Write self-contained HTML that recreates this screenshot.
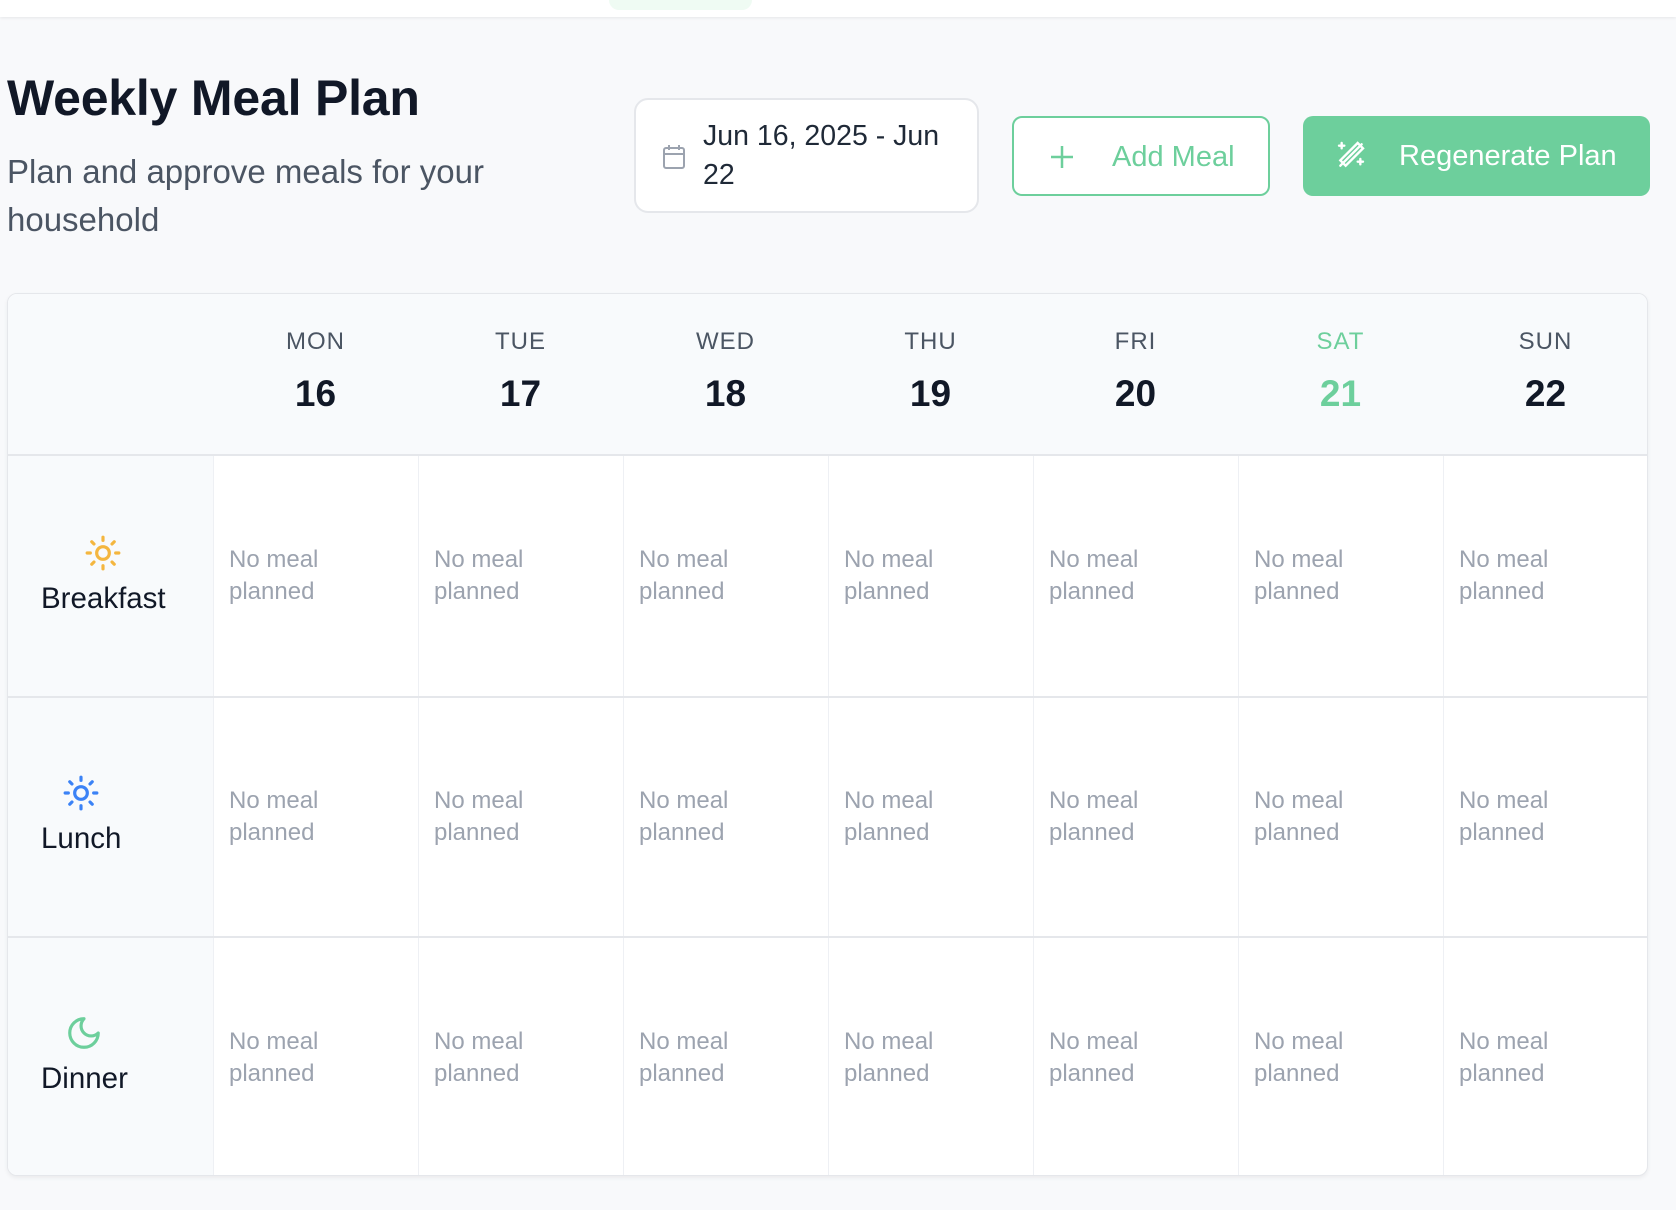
<!DOCTYPE html>
<html><head><meta charset="utf-8"><style>
*{box-sizing:border-box;margin:0;padding:0}
body{width:1676px;height:1210px;background:#f8f9fb;font-family:"Liberation Sans",sans-serif;position:relative;overflow:hidden}
.topbar{position:absolute;left:0;top:0;width:1676px;height:17px;background:#fff;box-shadow:0 1px 3px rgba(0,0,0,.08)}
.tab{position:absolute;left:609px;top:0;width:143px;height:10px;background:#effbf3;border-radius:0 0 10px 10px}
h1{position:absolute;left:7px;top:69px;font-size:50px;font-weight:bold;color:#111827;letter-spacing:-0.2px}
.sub{position:absolute;left:7px;top:148px;width:540px;font-size:33px;line-height:48px;color:#4b5563}
.date{position:absolute;left:634px;top:98px;width:345px;height:115px;background:#fff;border:2px solid #e5e7eb;border-radius:14px}
.date svg{position:absolute;left:26px;top:44px}
.date .t{position:absolute;left:67px;top:17px;font-size:28.5px;line-height:39px;color:#1f2937}
.add{position:absolute;left:1012px;top:116px;width:258px;height:80px;border:2px solid #6dcf9c;border-radius:10px;background:#fff;color:#6dcf9c;font-size:29px}
.add span{position:absolute;left:98px;top:23px}
.add svg{position:absolute;left:36px;top:27px}
.regen{position:absolute;left:1303px;top:116px;width:347px;height:80px;background:#6dcf9c;border-radius:10px;color:#fff;font-size:29px}
.regen span{position:absolute;left:96px;top:24px}
.regen svg{position:absolute;left:32px;top:23px}
.card{position:absolute;left:7px;top:293px;width:1641px;height:883px;background:#fff;border:1px solid #e5e7eb;border-radius:10px;box-shadow:0 2px 4px rgba(0,0,0,.06);overflow:hidden}
.hdr{position:absolute;left:0;top:0;width:100%;height:162px;background:#f8fafc;border-bottom:2px solid #e5e7eb}
.day{position:absolute;top:0;width:205px;text-align:center}
.day .n{position:absolute;top:34px;width:100%;font-size:24px;color:#4b5563;letter-spacing:1px}
.day .d{position:absolute;top:79px;width:100%;font-size:37px;font-weight:bold;color:#111827}
.day.sat .n,.day.sat .d{color:#6dcf9c}
.lab{position:absolute;left:0;width:205px;background:#f8fafc}
.lab .in{position:absolute;left:33px;display:flex;flex-direction:column;align-items:center;font-size:29.5px;color:#111827}
.row{position:absolute;left:0;width:100%;border-bottom:2px solid #e5e7eb}
.cell{position:absolute;width:205px;border-left:1px solid #eef0f4;height:100%}
.cell span{position:absolute;left:15px;top:50%;transform:translateY(-50%);font-size:24px;line-height:32px;color:#9ca3af}
</style></head><body>
<div class="topbar"><div class="tab"></div></div>
<h1>Weekly Meal Plan</h1>
<div class="sub">Plan and approve meals for your household</div>
<div class="date"><svg width="24" height="26" viewBox="0 0 24 26" fill="none" stroke="#9ca3af" stroke-width="2"><rect x="2" y="4" width="20" height="20" rx="2"/><path d="M2 10h20M7 1v5M17 1v5"/></svg><div class="t">Jun 16, 2025 - Jun<br>22</div></div>
<div class="add"><svg width="24" height="24" viewBox="0 0 24 24" stroke="#6dcf9c" stroke-width="2.5"><path d="M12 1v22M1 12h22"/></svg><span>Add Meal</span></div>
<div class="regen"><svg width="32" height="32" viewBox="0 0 24 24" fill="none" stroke="#fff" stroke-width="1.8" stroke-linecap="round"><path d="M20 4 4 20M17 3l4 4-13 13-4-4z"/><path d="M5 3v4M3 5h4M19 15v4M17 17h4"/></svg><span>Regenerate Plan</span></div>
<div class="card">
<div class="hdr">
<div class="day" style="left:205px"><div class="n">MON</div><div class="d">16</div></div>
<div class="day" style="left:410px"><div class="n">TUE</div><div class="d">17</div></div>
<div class="day" style="left:615px"><div class="n">WED</div><div class="d">18</div></div>
<div class="day" style="left:820px"><div class="n">THU</div><div class="d">19</div></div>
<div class="day" style="left:1025px"><div class="n">FRI</div><div class="d">20</div></div>
<div class="day sat" style="left:1230px"><div class="n">SAT</div><div class="d">21</div></div>
<div class="day" style="left:1435px"><div class="n">SUN</div><div class="d">22</div></div>
</div>
<div class="row" style="top:162px;height:242px">
<div class="lab" style="height:100%"><div class="in" style="top:78px"><svg width="38" height="38" viewBox="0 0 24 24" fill="none" stroke="#f4b63f" stroke-width="2" stroke-linecap="round"><circle cx="12" cy="12" r="4"/><path d="M12 2v2M12 20v2M4.9 4.9l1.4 1.4M17.7 17.7l1.4 1.4M2 12h2M20 12h2M4.9 19.1l1.4-1.4M17.7 6.3l1.4-1.4"/></svg><div style="margin-top:10px">Breakfast</div></div></div>
<div class="cell" style="left:205px"><span>No meal<br>planned</span></div><div class="cell" style="left:410px"><span>No meal<br>planned</span></div><div class="cell" style="left:615px"><span>No meal<br>planned</span></div><div class="cell" style="left:820px"><span>No meal<br>planned</span></div><div class="cell" style="left:1025px"><span>No meal<br>planned</span></div><div class="cell" style="left:1230px"><span>No meal<br>planned</span></div><div class="cell" style="left:1435px"><span>No meal<br>planned</span></div>
</div>
<div class="row" style="top:404px;height:240px">
<div class="lab" style="height:100%"><div class="in" style="top:76px"><svg width="38" height="38" viewBox="0 0 24 24" fill="none" stroke="#3b82f6" stroke-width="2" stroke-linecap="round"><circle cx="12" cy="12" r="4"/><path d="M12 2v2M12 20v2M4.9 4.9l1.4 1.4M17.7 17.7l1.4 1.4M2 12h2M20 12h2M4.9 19.1l1.4-1.4M17.7 6.3l1.4-1.4"/></svg><div style="margin-top:10px">Lunch</div></div></div>
<div class="cell" style="left:205px"><span>No meal<br>planned</span></div><div class="cell" style="left:410px"><span>No meal<br>planned</span></div><div class="cell" style="left:615px"><span>No meal<br>planned</span></div><div class="cell" style="left:820px"><span>No meal<br>planned</span></div><div class="cell" style="left:1025px"><span>No meal<br>planned</span></div><div class="cell" style="left:1230px"><span>No meal<br>planned</span></div><div class="cell" style="left:1435px"><span>No meal<br>planned</span></div>
</div>
<div class="row" style="top:644px;height:240px;border-bottom:none">
<div class="lab" style="height:100%"><div class="in" style="top:76px"><svg width="38" height="38" viewBox="0 0 24 24" fill="none" stroke="#6dcf9c" stroke-width="2" stroke-linecap="round" stroke-linejoin="round"><path d="M12 3a6 6 0 0 0 9 9 9 9 0 1 1-9-9z"/></svg><div style="margin-top:10px">Dinner</div></div></div>
<div class="cell" style="left:205px"><span>No meal<br>planned</span></div><div class="cell" style="left:410px"><span>No meal<br>planned</span></div><div class="cell" style="left:615px"><span>No meal<br>planned</span></div><div class="cell" style="left:820px"><span>No meal<br>planned</span></div><div class="cell" style="left:1025px"><span>No meal<br>planned</span></div><div class="cell" style="left:1230px"><span>No meal<br>planned</span></div><div class="cell" style="left:1435px"><span>No meal<br>planned</span></div>
</div>
</div>
</body></html>
